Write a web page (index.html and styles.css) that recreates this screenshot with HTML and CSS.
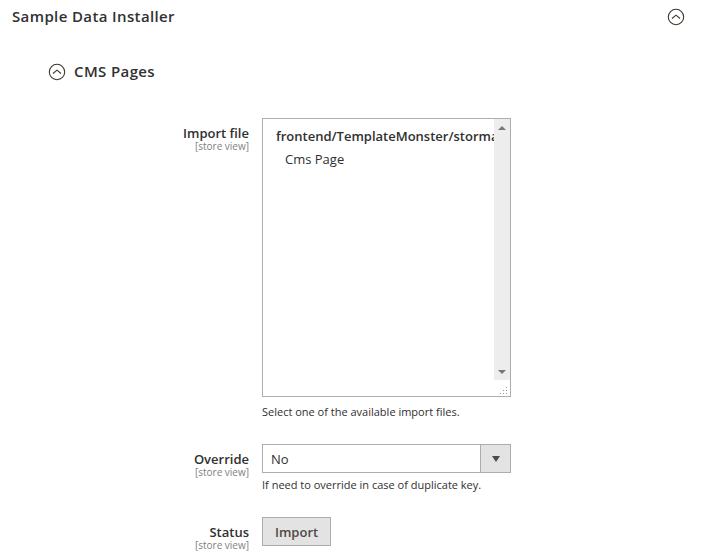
FILE: index.html
```html
<!DOCTYPE html>
<html lang="en">
<head>
<meta charset="utf-8">
<meta name="viewport" content="width=device-width, initial-scale=1">
<title>Sample Data Installer</title>
<link rel="stylesheet" href="styles.css">
</head>
<body>
<main class="section">
  <header class="section-head">
    <h1 class="heading">Sample Data Installer</h1>
    <button class="toggle" type="button" aria-label="Collapse Sample Data Installer">
      <svg class="toggle-icon" viewBox="0 0 18 18" aria-hidden="true"><circle cx="9" cy="9" r="7.7"/><path d="M5 10.5 9 7.2l4 3.3"/></svg>
    </button>
  </header>
  <div class="group-head">
    <button class="toggle" type="button" aria-label="Collapse CMS Pages">
      <svg class="toggle-icon" viewBox="0 0 18 18" aria-hidden="true"><circle cx="9" cy="9" r="7.7"/><path d="M5 10.5 9 7.2l4 3.3"/></svg>
    </button>
    <h2 class="heading">CMS Pages</h2>
  </div>
  <form class="fields">
    <div class="field">
      <label class="label" for="import-file">Import file<span class="scope">[store view]</span></label>
      <div class="control">
        <div class="listbox">
          <select class="list" id="import-file" size="10">
            <optgroup label="frontend/TemplateMonster/stormart">
              <option>Cms Page</option>
            </optgroup>
          </select>
          <div class="rail" aria-hidden="true">
            <svg class="arrow" viewBox="0 0 8 4"><path d="M0 4 4 0l4 4z"/></svg>
            <svg class="arrow" viewBox="0 0 8 4"><path d="M0 0h8L4 4z"/></svg>
          </div>
          <svg class="grip" viewBox="0 0 8 8" aria-hidden="true"><path d="M6 0h1v1H6zM3 3h1v1H3zM6 3h1v1H6zM0 6h1v1H0zM3 6h1v1H3zM6 6h1v1H6z"/></svg>
        </div>
        <p class="note note-list">Select one of the available import files.</p>
      </div>
    </div>
    <div class="field">
      <label class="label" for="override">Override<span class="scope">[store view]</span></label>
      <div class="control">
        <div class="dropdown">
          <select class="select" id="override">
            <option>No</option>
            <option>Yes</option>
          </select>
          <span class="dropdown-mark" aria-hidden="true">
            <svg class="caret" viewBox="0 0 8 6"><path d="M0 0h8L4 6z"/></svg>
          </span>
        </div>
        <p class="note">If need to override in case of duplicate key.</p>
      </div>
    </div>
    <div class="field">
      <label class="label" for="import">Status<span class="scope">[store view]</span></label>
      <div class="control">
        <button class="button" id="import" type="button">Import</button>
      </div>
    </div>
  </form>
</main>
</body>
</html>
```
FILE: styles.css
```css
* {
  box-sizing: border-box;
}

body {
  margin: 0;
  background: #fff;
  color: #303030;
  font-family: "Open Sans", sans-serif;
  font-size: 13px;
  line-height: 18px;
}

.section {
  padding: 7px 12px 0;
}

.section-head,
.group-head {
  display: flex;
  align-items: center;
  height: 20px;
}

.section-head {
  justify-content: space-between;
  padding-right: 10px;
}

.group-head {
  gap: 8px;
  margin-top: 35px;
  padding-left: 36px;
}

.heading {
  margin: 0;
  padding-bottom: 2px;
  font-size: 15px;
  font-weight: 600;
  line-height: 18px;
  letter-spacing: 0.025em;
}

.toggle {
  display: flex;
  padding: 0;
  border: 0;
  background: none;
}

.toggle-icon {
  width: 18px;
  height: 18px;
  fill: none;
  stroke: #41362f;
  stroke-width: 1.1;
}

.fields {
  margin-top: 36px;
}

.field {
  display: grid;
  grid-template-columns: minmax(0, 237fr) minmax(0, 249fr) minmax(0, 171fr);
  column-gap: 13px;
}

.field + .field {
  margin-top: 23px;
}

.label {
  padding-top: 8px;
  font-weight: 600;
  line-height: 14px;
  text-align: right;
}

.scope {
  display: block;
  color: #808080;
  font-size: 10px;
  font-weight: 400;
  line-height: 12px;
}

.listbox {
  position: relative;
  display: flex;
  height: 279px;
  padding-bottom: 16px;
  border: 1px solid #adadad;
}

.list {
  flex: 1;
  min-width: 0;
  padding: 8px 0 0 8px;
  overflow: hidden;
  border: 0;
  outline: 0;
  background: #fff;
  color: #303030;
  font: 13px/18px "Open Sans", sans-serif;
}

.list optgroup {
  padding-left: 3px;
  font-weight: 600;
}

.list option {
  padding: 4px 11px;
  font-weight: 400;
}

.rail {
  display: flex;
  flex-direction: column;
  align-items: center;
  justify-content: space-between;
  width: 16px;
  padding: 7px 0 6px;
  background: #ededed;
}

.arrow {
  width: 8px;
  height: 4px;
  fill: #777;
}

.grip {
  position: absolute;
  right: 2px;
  bottom: 1px;
  width: 8px;
  height: 8px;
  fill: #999;
}

.note {
  margin: 3px 0 0;
  font-size: 11px;
}

.note-list {
  margin-top: 6px;
}

.dropdown {
  position: relative;
}

.select {
  display: block;
  width: 100%;
  height: 29px;
  padding: 0 36px 0 8px;
  border: 1px solid #adadad;
  border-radius: 0;
  appearance: none;
  background: #fff;
  color: #303030;
  font: inherit;
}

.dropdown-mark {
  position: absolute;
  top: 0;
  right: 0;
  display: flex;
  align-items: center;
  justify-content: center;
  width: 31px;
  height: 29px;
  border: 1px solid #adadad;
  background: #e3e3e3;
  pointer-events: none;
}

.caret {
  width: 8px;
  height: 6px;
  fill: #514943;
}

.button {
  height: 29px;
  padding: 0 12px;
  border: 1px solid #adadad;
  border-radius: 0;
  background: #e3e3e3;
  color: #514943;
  font: inherit;
  font-weight: 600;
}
```
